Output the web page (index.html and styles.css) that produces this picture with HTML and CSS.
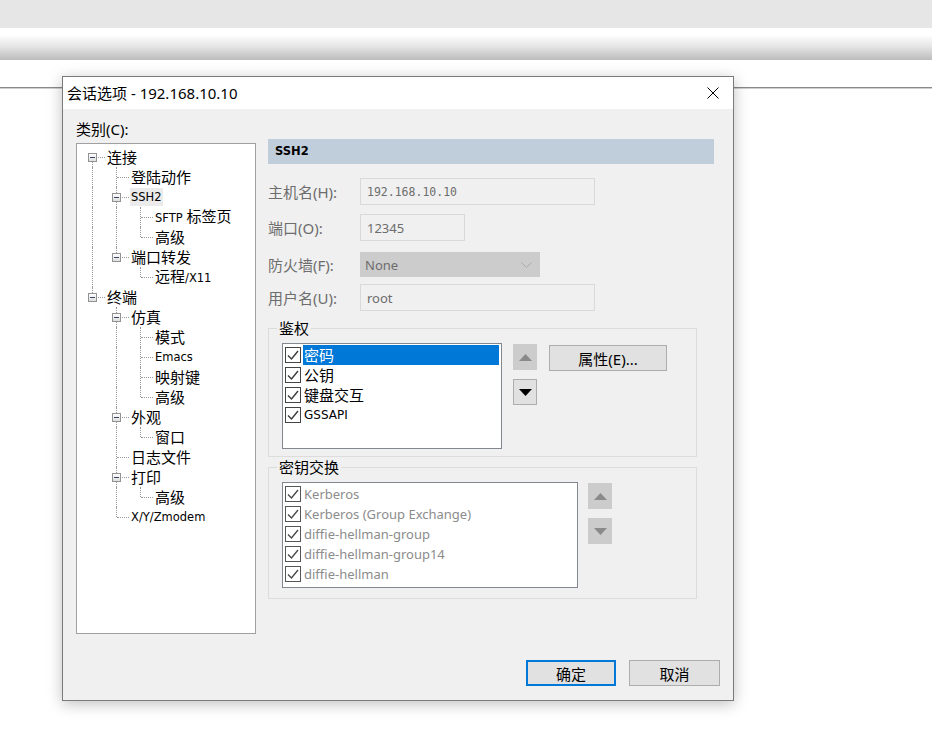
FILE: index.html
```html
<!DOCTYPE html>
<html>
<head>
<meta charset="utf-8">
<title>会话选项</title>
<link rel="stylesheet" href="styles.css">
</head>
<body>
<div class="band1"></div>
<div class="band2"></div>
<div class="desk">
  <div class="hline"></div>
  <div class="dialog">
    <div class="titlebar">
      <span class="title">会话选项 - 192.168.10.10</span>
      <svg class="close" width="12" height="12" viewBox="0 0 12 12"><path d="M0.5 0.5 L11.5 11.5 M11.5 0.5 L0.5 11.5" stroke="#000" stroke-width="1" fill="none"/></svg>
    </div>
    <div class="dbody">
      <div class="main">
        <div class="left">
          <div class="cat">类别(C):</div>
          <div class="tree">
            <div class="tr"><span class="n first exp"><i></i></span><span class="t">连接</span></div>
            <div class="tr"><span class="c l"></span><span class="n"></span><span class="t">登陆动作</span></div>
            <div class="tr"><span class="c l"></span><span class="n exp"><i></i></span><span class="t hl en">SSH2</span></div>
            <div class="tr"><span class="c l"></span><span class="c l"></span><span class="n"></span><span class="t"><span class="en">SFTP</span> 标签页</span></div>
            <div class="tr"><span class="c l"></span><span class="c l"></span><span class="n last"></span><span class="t">高级</span></div>
            <div class="tr"><span class="c l"></span><span class="n last exp"><i></i></span><span class="t">端口转发</span></div>
            <div class="tr"><span class="c l"></span><span class="c"></span><span class="n last"></span><span class="t">远程<span class="en">/X11</span></span></div>
            <div class="tr"><span class="n last exp"><i></i></span><span class="t">终端</span></div>
            <div class="tr"><span class="c"></span><span class="n exp"><i></i></span><span class="t">仿真</span></div>
            <div class="tr"><span class="c"></span><span class="c l"></span><span class="n"></span><span class="t">模式</span></div>
            <div class="tr"><span class="c"></span><span class="c l"></span><span class="n"></span><span class="t en">Emacs</span></div>
            <div class="tr"><span class="c"></span><span class="c l"></span><span class="n"></span><span class="t">映射键</span></div>
            <div class="tr"><span class="c"></span><span class="c l"></span><span class="n last"></span><span class="t">高级</span></div>
            <div class="tr"><span class="c"></span><span class="n exp"><i></i></span><span class="t">外观</span></div>
            <div class="tr"><span class="c"></span><span class="c l"></span><span class="n last"></span><span class="t">窗口</span></div>
            <div class="tr"><span class="c"></span><span class="n"></span><span class="t">日志文件</span></div>
            <div class="tr"><span class="c"></span><span class="n exp"><i></i></span><span class="t">打印</span></div>
            <div class="tr"><span class="c"></span><span class="c l"></span><span class="n last"></span><span class="t">高级</span></div>
            <div class="tr"><span class="c"></span><span class="n last"></span><span class="t en">X/Y/Zmodem</span></div>
          </div>
        </div>
        <div class="right">
          <div class="hdr">SSH2</div>
          <div class="frow r1"><span class="lbl">主机名(H):</span><div class="inp host">192.168.10.10</div></div>
          <div class="frow r2"><span class="lbl">端口(O):</span><div class="inp port">12345</div></div>
          <div class="frow r3"><span class="lbl">防火墙(F):</span><div class="dd"><span>None</span><svg class="chev" width="11" height="6" viewBox="0 0 11 6"><path d="M0.5 0.5 L5.5 5.5 L10.5 0.5" stroke="#a9a9a9" fill="none"/></svg></div></div>
          <div class="frow r4"><span class="lbl">用户名(U):</span><div class="inp user">root</div></div>

          <fieldset class="grp auth">
            <legend>鉴权</legend>
            <div class="lrow">
              <div class="list alist">
                <div class="item selected"><svg class="cb" viewBox="0 0 16 16"><rect x="0.5" y="0.5" width="15" height="15" fill="#fff" stroke="#444"/><path d="M3 8.5 L6.5 12 L13 4" fill="none" stroke="#3a3a3a" stroke-width="1.4"/></svg><span class="tx">密码</span></div>
                <div class="item"><svg class="cb" viewBox="0 0 16 16"><rect x="0.5" y="0.5" width="15" height="15" fill="#fff" stroke="#444"/><path d="M3 8.5 L6.5 12 L13 4" fill="none" stroke="#3a3a3a" stroke-width="1.4"/></svg><span class="tx">公钥</span></div>
                <div class="item"><svg class="cb" viewBox="0 0 16 16"><rect x="0.5" y="0.5" width="15" height="15" fill="#fff" stroke="#444"/><path d="M3 8.5 L6.5 12 L13 4" fill="none" stroke="#3a3a3a" stroke-width="1.4"/></svg><span class="tx">键盘交互</span></div>
                <div class="item"><svg class="cb" viewBox="0 0 16 16"><rect x="0.5" y="0.5" width="15" height="15" fill="#fff" stroke="#444"/><path d="M3 8.5 L6.5 12 L13 4" fill="none" stroke="#3a3a3a" stroke-width="1.4"/></svg><span class="tx gss">GSSAPI</span></div>
              </div>
              <div class="arrows">
                <div class="ab dis"><svg width="13" height="7" viewBox="0 0 13 7"><path d="M0 7 L13 7 L6.5 0 Z" fill="#8a8a8a"/></svg></div>
                <div class="ab on"><svg width="13" height="7" viewBox="0 0 13 7"><path d="M0 0 L13 0 L6.5 7 Z" fill="#000"/></svg></div>
              </div>
              <button class="prop">属性(E)...</button>
            </div>
          </fieldset>

          <fieldset class="grp kex">
            <legend>密钥交换</legend>
            <div class="lrow">
              <div class="list klist">
                <div class="item"><svg class="cb" viewBox="0 0 16 16"><rect x="0.5" y="0.5" width="15" height="15" fill="#fff" stroke="#555"/><path d="M3 8.5 L6.5 12 L13 4" fill="none" stroke="#4a4a4a" stroke-width="1.4"/></svg><span class="tx">Kerberos</span></div>
                <div class="item"><svg class="cb" viewBox="0 0 16 16"><rect x="0.5" y="0.5" width="15" height="15" fill="#fff" stroke="#555"/><path d="M3 8.5 L6.5 12 L13 4" fill="none" stroke="#4a4a4a" stroke-width="1.4"/></svg><span class="tx">Kerberos (Group Exchange)</span></div>
                <div class="item"><svg class="cb" viewBox="0 0 16 16"><rect x="0.5" y="0.5" width="15" height="15" fill="#fff" stroke="#555"/><path d="M3 8.5 L6.5 12 L13 4" fill="none" stroke="#4a4a4a" stroke-width="1.4"/></svg><span class="tx">diffie-hellman-group</span></div>
                <div class="item"><svg class="cb" viewBox="0 0 16 16"><rect x="0.5" y="0.5" width="15" height="15" fill="#fff" stroke="#555"/><path d="M3 8.5 L6.5 12 L13 4" fill="none" stroke="#4a4a4a" stroke-width="1.4"/></svg><span class="tx">diffie-hellman-group14</span></div>
                <div class="item"><svg class="cb" viewBox="0 0 16 16"><rect x="0.5" y="0.5" width="15" height="15" fill="#fff" stroke="#555"/><path d="M3 8.5 L6.5 12 L13 4" fill="none" stroke="#4a4a4a" stroke-width="1.4"/></svg><span class="tx">diffie-hellman</span></div>
              </div>
              <div class="arrows karrows">
                <div class="ab dis"><svg width="13" height="7" viewBox="0 0 13 7"><path d="M0 7 L13 7 L6.5 0 Z" fill="#8a8a8a"/></svg></div>
                <div class="ab dis"><svg width="13" height="7" viewBox="0 0 13 7"><path d="M0 0 L13 0 L6.5 7 Z" fill="#8a8a8a"/></svg></div>
              </div>
            </div>
          </fieldset>
        </div>
      </div>
      <div class="buttons">
        <button class="btn default">确定</button>
        <button class="btn">取消</button>
      </div>
    </div>
  </div>
</div>
</body>
</html>
```
FILE: styles.css
```css
* { box-sizing: border-box; }
html, body { margin: 0; padding: 0; background: #fff; }
body {
  width: 932px;
  height: 741px;
  overflow: hidden;
  font-family: "Noto Sans", "Noto Sans CJK SC", sans-serif;
  font-size: 15px;
  color: #000;
}
.band1 { height: 28px; background: #e6e6e6; }
.band2 {
  height: 24px;
  margin-top: 8px;
  background: linear-gradient(#fcfcfc, #e4e4e4 45%, #bcbcbc);
}
.desk { position: relative; height: 681px; }
.hline {
  position: absolute;
  left: 0; right: 0; top: 27px;
  height: 2px;
  background: linear-gradient(#8a8a8a 50%, #cfcfcf 50%);
}
.dialog {
  position: absolute;
  left: 62px;
  top: 16px;
  width: 672px;
  height: 625px;
  border: 1px solid #7a7a7a;
  background: #f0f0f0;
  box-shadow: 0 3px 14px rgba(0, 0, 0, 0.25);
  display: flex;
  flex-direction: column;
}
.titlebar {
  height: 32px;
  flex: none;
  background: #fff;
  display: flex;
  align-items: center;
  padding-left: 4px;
}
.title { font-size: 15px; line-height: 20px; }
.close { margin-left: auto; margin-right: 14px; }
.dbody {
  flex: 1;
  display: flex;
  flex-direction: column;
  padding: 10px 13px 14px 13px;
}
.main { display: flex; gap: 12px; }
.left { width: 180px; flex: none; }
.cat { height: 20px; line-height: 20px; margin-bottom: 4px; }
.tree {
  height: 491px;
  border: 1px solid #a0a0a0;
  background: #fff;
  padding: 3px 0 0 4px;
}
.tr { display: flex; height: 20px; align-items: center; }
.c, .n { width: 24px; height: 20px; position: relative; flex: none; }
.c.l::before, .n::before {
  content: "";
  position: absolute;
  left: 11px; top: 0; bottom: 0;
  border-left: 1px dotted #9a9a9a;
}
.n.last::before { bottom: 10px; }
.n.first::before { top: 10px; }
.n::after {
  content: "";
  position: absolute;
  left: 12px; width: 12px; top: 10px;
  border-top: 1px dotted #9a9a9a;
}
.n i {
  position: absolute;
  left: 7px; top: 6px;
  width: 9px; height: 9px;
  border: 1px solid #929292;
  background: linear-gradient(#fff, #dedede);
  z-index: 1;
}
.n i::before {
  content: "";
  position: absolute;
  left: 1px; top: 3px;
  width: 5px; height: 1px;
  background: #3a4660;
}
.t { margin-left: 1px; padding: 0 1px; line-height: 20px; white-space: nowrap; font-size: 15px; }
.en { font-family: "DejaVu Sans", sans-serif; font-size: 11.5px; }
.t.hl { background: #ebebeb; line-height: 18px; }

.right { width: 446px; flex: none; margin-top: 20px; }
.hdr {
  height: 25px;
  line-height: 25px;
  background: #c0cedc;
  padding-left: 7px;
  font-family: "DejaVu Sans", sans-serif;
  font-weight: bold;
  font-size: 11.5px;
}
.frow { display: flex; align-items: center; }
.r1 { margin-top: 14px; }
.r2 { margin-top: 9px; }
.r3 { margin-top: 11px; }
.r4 { margin-top: 7px; }
.lbl { width: 92px; flex: none; color: #6d6d6d; line-height: 20px; }
.inp {
  height: 27px;
  border: 1px solid #d9d9d9;
  background: #f0f0f0;
  color: #6d6d6d;
  padding-left: 6px;
  display: flex;
  align-items: center;
  font-size: 13px;
}
.host { width: 235px; font-family: "DejaVu Sans Mono", monospace; font-size: 11.5px; }
.port { width: 105px; }
.user { width: 235px; }
.dd {
  width: 180px;
  height: 25px;
  background: #cccccc;
  color: #6d6d6d;
  display: flex;
  align-items: center;
  padding-left: 5px;
  font-size: 13px;
}
.chev { margin-left: auto; margin-right: 8px; }

.grp {
  width: 429px;
  margin: 9px 0 0 0;
  padding: 0 0 7px 0;
  border: 1px solid #dcdcdc;
  min-width: 0;
}
.grp legend {
  margin-left: 8px;
  padding: 0 2px;
  line-height: 16px;
  font-size: 15px;
}
.kex { margin-top: 2px; padding-bottom: 10px; }
.lrow { display: flex; align-items: flex-start; margin: 7px 0 0 13px; }
.list {
  height: 106px;
  border: 1px solid #828790;
  background: #fff;
  padding: 1px 2px 0 2px;
  flex: none;
}
.alist { width: 220px; }
.klist { width: 296px; }
.item { height: 20px; display: flex; align-items: center; }
.cb { width: 16px; height: 16px; flex: none; margin-right: 2px; }
.tx { line-height: 20px; padding: 0 1px; white-space: nowrap; }
.item.selected .tx { flex: 1; background: #0078d7; color: #fff; }
.gss { font-family: "DejaVu Sans", sans-serif; font-size: 12px; }
.klist .tx { color: #8c8c8c; font-size: 13px; }
.arrows { display: flex; flex-direction: column; gap: 9px; margin-left: 11px; margin-top: 1px; }
.karrows { margin-left: 10px; }
.ab {
  width: 24px; height: 26px;
  display: flex; align-items: center; justify-content: center;
}
.ab.dis { background: #cccccc; }
.ab.on { background: #e1e1e1; border: 1px solid #adadad; }
.prop {
  margin-left: 12px;
  margin-top: 2px;
  width: 118px;
  height: 26px;
  background: #e1e1e1;
  border: 1px solid #adadad;
  font-family: "Noto Sans", "Noto Sans CJK SC", sans-serif;
  font-size: 15px;
  padding: 0;
  color: #000;
}
.buttons { margin-top: auto; display: flex; justify-content: flex-end; gap: 13px; }
.btn {
  width: 90px;
  height: 26px;
  background: #e1e1e1;
  border: 1px solid #adadad;
  font-family: "Noto Sans", "Noto Sans CJK SC", sans-serif;
  font-size: 15px;
  padding: 0;
  color: #000;
}
.btn + .btn { width: 91px; }
.btn.default { border: 2px solid #0078d7; }
```
